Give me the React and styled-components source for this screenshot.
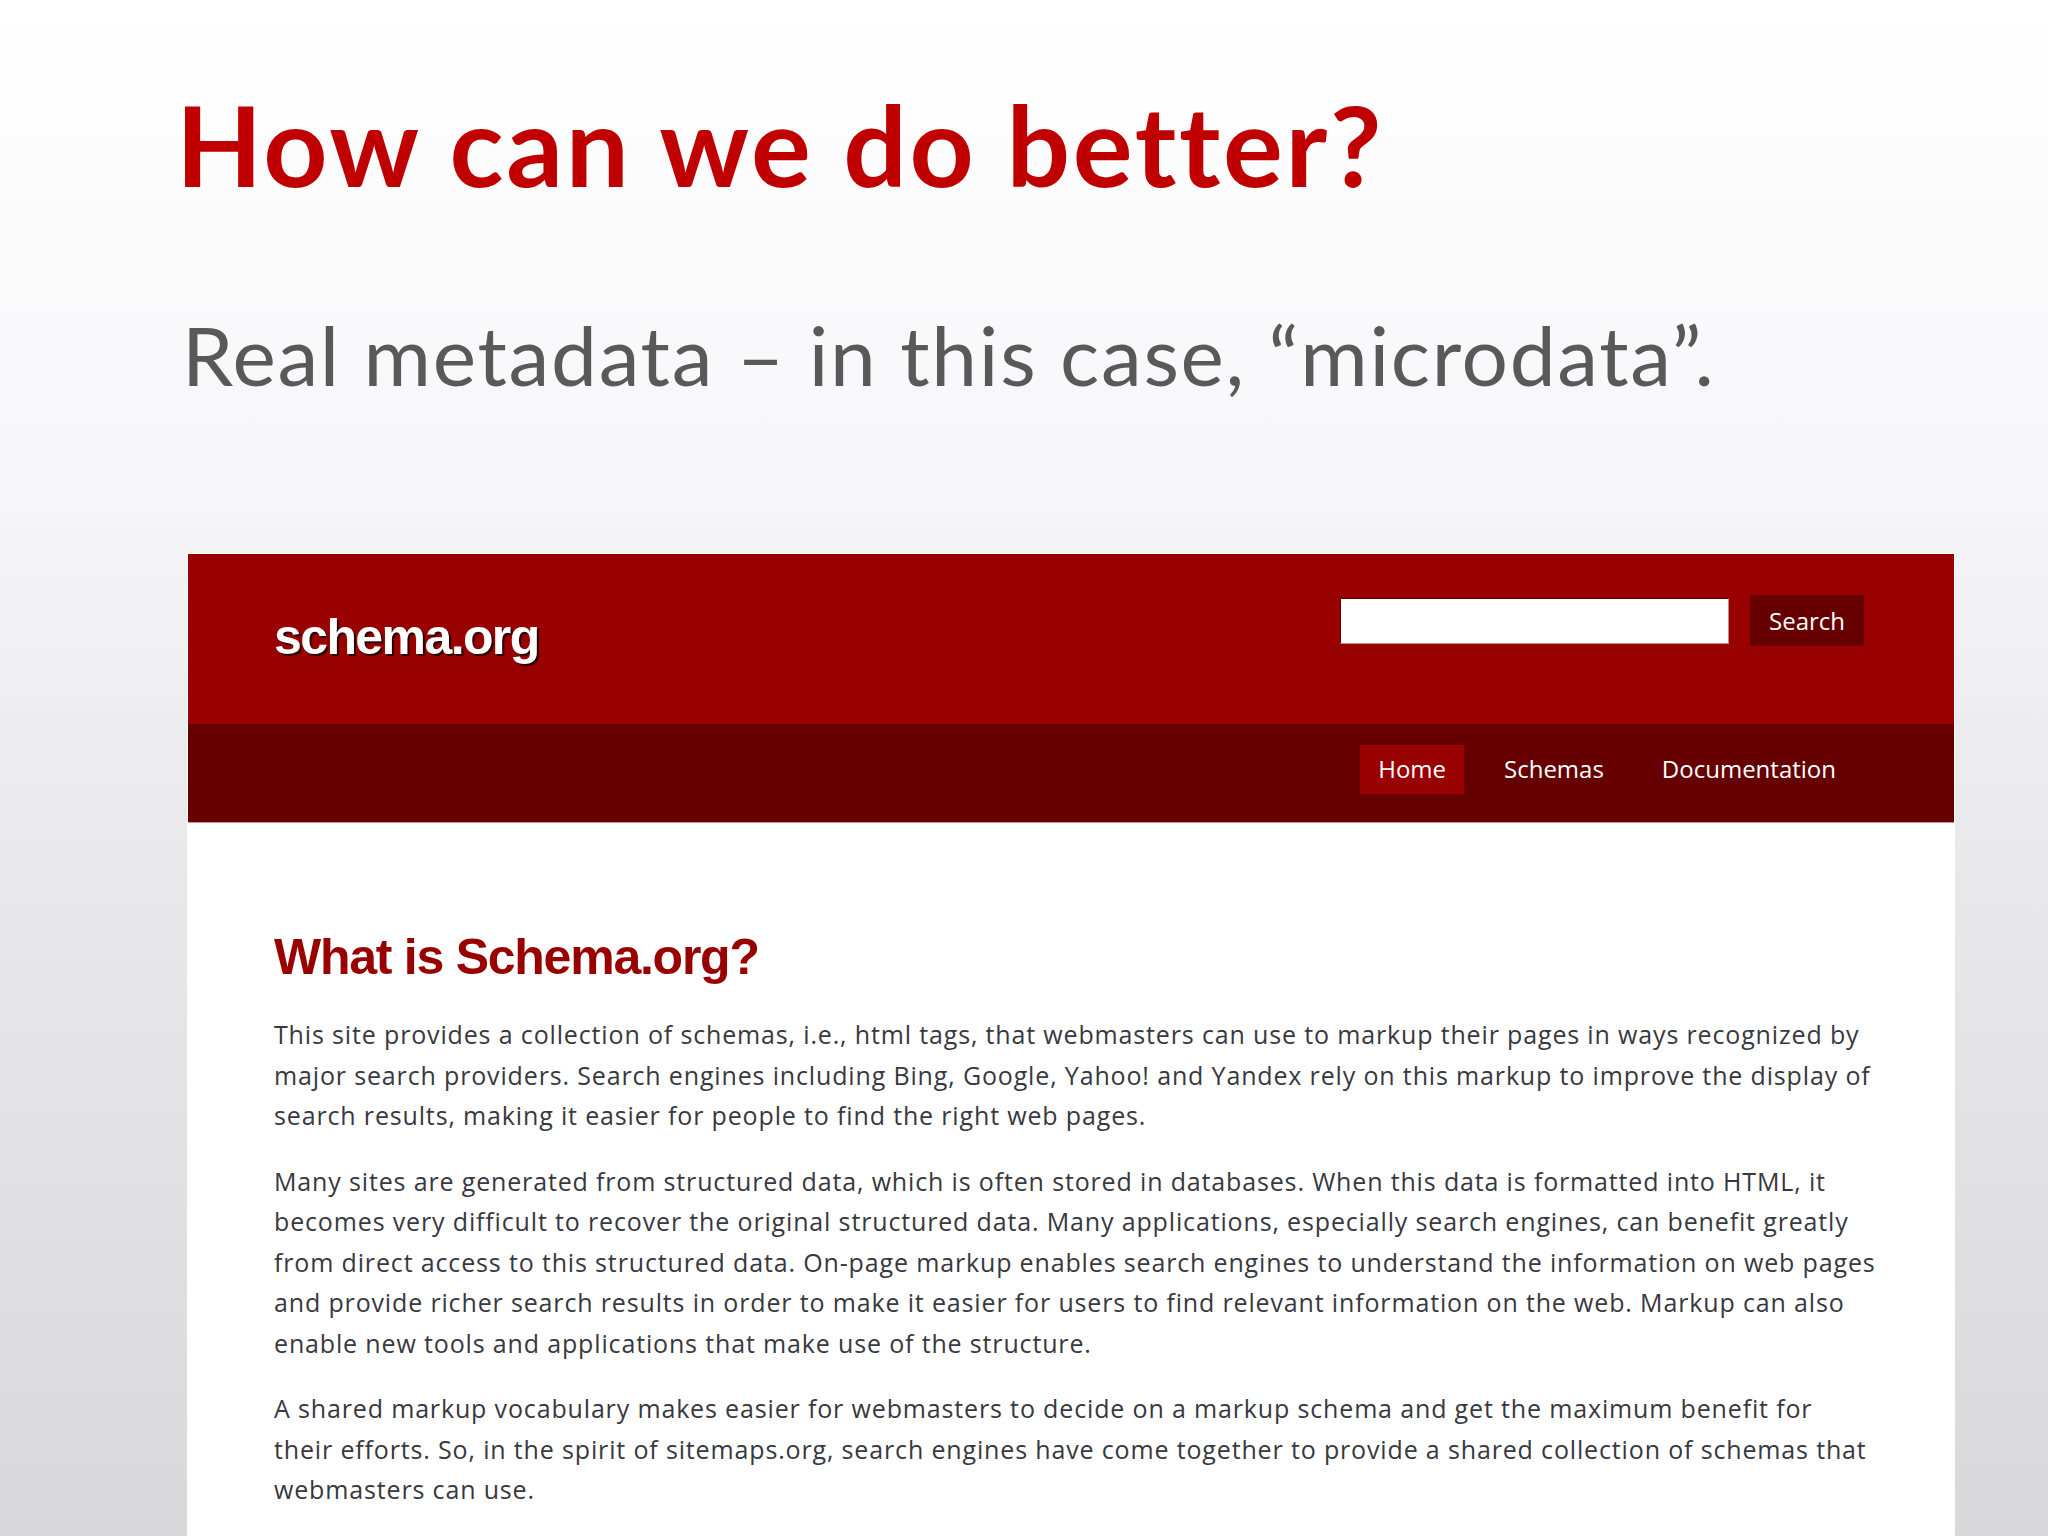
import React from "react";
import styled, { createGlobalStyle } from "styled-components";

const GlobalStyle = createGlobalStyle`
  html, body { margin: 0; padding: 0; }
  body { width: 2048px; height: 1536px; overflow: hidden; }
`;

const Slide = styled.div`
  width: 2048px;
  height: 1536px;
  overflow: hidden;
  box-sizing: border-box;
  display: flex;
  flex-direction: column;
  background: linear-gradient(180deg, #ffffff 0%, #f7f7f9 30%, #e9e8eb 55%, #d8d8da 100%);
  font-family: Lato, "Open Sans", sans-serif;
`;

const Title = styled.h1`
  margin: 88px 0 0 176px;
  font-family: Lato, sans-serif;
  font-weight: 700;
  font-size: 112px;
  letter-spacing: 2.7px;
  line-height: 1;
  color: #c00000;
  white-space: nowrap;
`;

const Subtitle = styled.p`
  margin: 113px 0 0 182px;
  font-family: Lato, sans-serif;
  font-weight: 400;
  font-size: 82px;
  letter-spacing: 1.7px;
  line-height: 1;
  color: #595959;
  white-space: nowrap;
`;

const Frame = styled.div`
  margin: 158px 93px 0 187px;
  flex: 1;
  border: 1px solid #ffffff;
  border-bottom: none;
  background: #ffffff;
  display: flex;
  flex-direction: column;
  overflow: hidden;
`;

const Header = styled.header`
  height: 170px;
  background: #990000;
  display: flex;
  justify-content: space-between;
  align-items: flex-start;
  padding: 0 90px 0 86px;
  box-sizing: border-box;
`;

const Logo = styled.div`
  margin-top: 58px;
  font-family: "Liberation Sans", Arial, sans-serif;
  font-weight: 700;
  font-size: 50px;
  letter-spacing: -1.6px;
  line-height: 1;
  color: #ffffff;
  text-shadow: 2px 2px 1px #2a0000;
`;

const SearchForm = styled.form`
  margin-top: 41px;
  display: flex;
  align-items: center;
  gap: 21px;
`;

const SearchInput = styled.input`
  width: 389px;
  height: 46px;
  box-sizing: border-box;
  border: 1px solid #5a0000;
  border-bottom-color: #c88;
  border-right-color: #c88;
  background: #ffffff;
  padding: 0 8px;
  outline: none;
`;

const SearchButton = styled.button`
  height: 51px;
  padding: 0 19px;
  border: none;
  background: #660000;
  color: #ffffff;
  font-family: "Open Sans", sans-serif;
  font-size: 24px;
  line-height: 51px;
`;

const Nav = styled.nav`
  height: 99px;
  box-sizing: border-box;
  background: #660000;
  border-bottom: 1px solid #d89090;
  display: flex;
  justify-content: flex-end;
  align-items: flex-start;
  padding: 21px 100px 0 0;
  gap: 22px;
`;

const NavItem = styled.a`
  height: 49px;
  line-height: 48px;
  padding: 0 18px;
  font-family: "Open Sans", sans-serif;
  font-size: 24px;
  color: #ffffff;
  text-decoration: none;
  background: ${(p) => (p.$active ? "#990000" : "transparent")};
`;

const Content = styled.main`
  padding: 104px 86px 0 86px;
`;

const Heading = styled.h2`
  margin: 0 0 27px;
  font-family: "Liberation Sans", Arial, sans-serif;
  font-weight: 700;
  font-size: 50px;
  letter-spacing: -1.25px;
  line-height: 60px;
  color: #990000;
`;

const Para = styled.p`
  margin: 0 0 25px;
  font-family: "Open Sans", sans-serif;
  font-size: 25px;
  letter-spacing: 0.85px;
  line-height: 40.5px;
  color: #383840;
`;

const Line = styled.span`
  display: block;
  white-space: nowrap;
`;

const paragraphs = [
  [
    "This site provides a collection of schemas, i.e., html tags, that webmasters can use to markup their pages in ways recognized by",
    "major search providers. Search engines including Bing, Google, Yahoo! and Yandex rely on this markup to improve the display of",
    "search results, making it easier for people to find the right web pages.",
  ],
  [
    "Many sites are generated from structured data, which is often stored in databases. When this data is formatted into HTML, it",
    "becomes very difficult to recover the original structured data. Many applications, especially search engines, can benefit greatly",
    "from direct access to this structured data. On-page markup enables search engines to understand the information on web pages",
    "and provide richer search results in order to make it easier for users to find relevant information on the web. Markup can also",
    "enable new tools and applications that make use of the structure.",
  ],
  [
    "A shared markup vocabulary makes easier for webmasters to decide on a markup schema and get the maximum benefit for",
    "their efforts. So, in the spirit of sitemaps.org, search engines have come together to provide a shared collection of schemas that",
    "webmasters can use.",
  ],
];

export default function App() {
  return (
    <>
      <GlobalStyle />
      <Slide>
        <Title>How can we do better?</Title>
        <Subtitle>Real metadata – in this case, “microdata”.</Subtitle>
        <Frame>
          <Header>
            <Logo>schema.org</Logo>
            <SearchForm onSubmit={(e) => e.preventDefault()}>
              <SearchInput type="text" aria-label="Search" />
              <SearchButton type="submit">Search</SearchButton>
            </SearchForm>
          </Header>
          <Nav>
            <NavItem $active href="#">Home</NavItem>
            <NavItem href="#">Schemas</NavItem>
            <NavItem href="#">Documentation</NavItem>
          </Nav>
          <Content>
            <Heading>What is Schema.org?</Heading>
            {paragraphs.map((lines, i) => (
              <Para key={i}>
                {lines.map((l, j) => (
                  <Line key={j}>{l}</Line>
                ))}
              </Para>
            ))}
          </Content>
        </Frame>
      </Slide>
    </>
  );
}
